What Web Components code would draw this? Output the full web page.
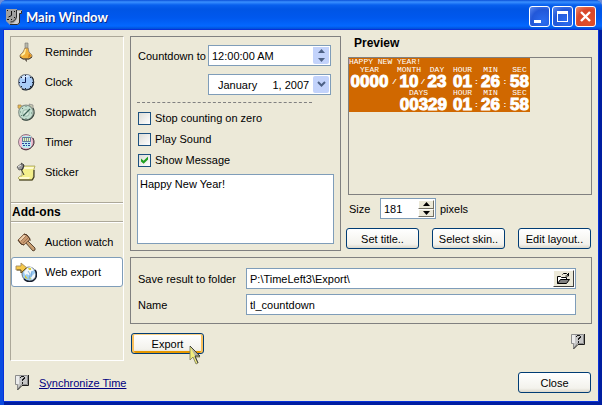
<!DOCTYPE html>
<html lang="en">
<head>
<meta charset="utf-8">
<title>Main Window</title>
<style>
  body {
    margin: 0;
    background: #6f8fd8;
    font: 11px/14px "Liberation Sans", sans-serif;
    color: #000;
    --face: #ece9d8;
    --edge: #7f9db9;
    --frame: #808080;
  }
</style>
</head>
<body>
<main-window></main-window>

<script>
/* ------------------------------------------------------------ */
/* Icons                                                        */
/* ------------------------------------------------------------ */

const ICONS = {
  app: `<svg width="16" height="16" viewBox="0 0 16 16">
    <path d="M0 0h11v1h5v4h-2v9l-2 2H4l-4-4z" fill="#a0a0a0"/>
    <path d="M11 2h4v2h-2v9l-2 2H5c4-1 6-4 6-7z" fill="#cfcfcf"/>
    <path d="M10.500 1v7c-1 3-3 5-6 5M15.500 2v2.500h-2V14l-2 1.500H4" fill="none" stroke="#2a2a2a"/>
    <path d="M5.500 2v4.500l-3 1.500M1 1.500h1M8 2.500h1M1 10.500h2M8 8.500h1M5 10.500h1" fill="none" stroke="#111"/>
  </svg>`,
  bell: `<svg width="20" height="20" viewBox="0 0 20 20">
    <path d="M9 1h3v6H9z" fill="#b8b8a8" stroke="#777" stroke-width=".6"/>
    <path d="M9 6h3l1 4 3 3v2l-3 2H7l-3-2v-2l3-3z" fill="#f0b13c" stroke="#8a7866" stroke-width=".8"/>
    <path d="M9 7h1l-1 5-3 2-1-1 3-3z" fill="#fff0a8"/>
    <path d="M13 11l2 3-3 2z" fill="#cf7d18"/>
    <path d="M4 15l3 2h6l3-2M10 17v2h1" fill="none" stroke="#40362c"/>
  </svg>`,
  clock: `<svg width="20" height="20" viewBox="0 0 20 20">
    <circle cx="10" cy="10" r="7.500" fill="#a9cdf8" stroke="#6f7680" stroke-width="1.200"/>
    <path d="M16 5a8 8 0 0 1-10 12" fill="none" stroke="#16202e" stroke-width="1.200"/>
    <path d="M5 6c2-3 6-4 9-2l-6 3z" fill="#d5e8ff"/>
    <path d="M9.500 5v5.500H6" fill="none" stroke="#101c50"/>
    <path d="M9.500 3v1M9.500 16v1M3 10.500h1M16 10.500h1M5 5l1 1M15 5l-1 1M5 15l1-1M15 15l-1-1" stroke="#18243a"/>
  </svg>`,
  stopwatch: `<svg width="20" height="20" viewBox="0 0 20 20">
    <path d="M2 3h3l1 2-2 2-2-1z" fill="#e7b94c" stroke="#9b8058" stroke-width=".7"/>
    <path d="M13 2l4 1v3l-2 1z" fill="#c7c8b0" stroke="#888" stroke-width=".7"/>
    <circle cx="10" cy="10.500" r="7.300" fill="#c2decf" stroke="#89958c" stroke-width="1.200"/>
    <path d="M17 6a8 8 0 0 1-11 11" fill="none" stroke="#35453e" stroke-width="1.200"/>
    <circle cx="10" cy="11" r="3.300" fill="#d8ebdf" stroke="#8fae9f" stroke-width=".8"/>
    <path d="M7 14l7-7" stroke="#3b6255" stroke-width="1.300"/>
    <path d="M10 4v1M10 16v1M4 10h1M15 11h1M6 6l1 1M5 14l1-1" stroke="#47685a" stroke-width=".8"/>
  </svg>`,
  timer: `<svg width="20" height="20" viewBox="0 0 20 20">
    <circle cx="10" cy="10" r="7.500" fill="#f4bfd3" stroke="#8d7a84"/>
    <path d="M17 6a8 8 0 0 1-12 10" fill="none" stroke="#4b303d"/>
    <path d="M6 4h9v11l-2 1H8l-2-1z" fill="#b9ecf0"/>
    <path d="M6.500 5.500h8v4h-8z" fill="#e4f8b8" stroke="#46588a" stroke-width=".8"/>
    <path d="M8.500 6v3M10.500 6v3M12.500 6v3" stroke="#5b6a94" stroke-width=".7"/>
    <path d="M6 11.500h2M9 11.500h2M12 11.500h2M7 13.500h2M10 13.500h1M12 13.500h2" stroke="#2c409c"/>
  </svg>`,
  sticker: `<svg width="20" height="20" viewBox="0 0 20 20">
    <path d="M5 4h14l-1 3-1 11H4l-2-2 2-2h2V7z" fill="#f4f08c" stroke="#a5a05a" stroke-width=".8"/>
    <path d="M7 5h11l-1 2H7zM3 15h11l-1 2H4z" fill="#fffbd0"/>
    <path d="M3 18h13l2-3V8" fill="none" stroke="#36331c" stroke-width="1.100"/>
    <path d="M1 5l4-3 3 2-1 3-4 1z" fill="#9a9a9a" stroke="#555" stroke-width=".8"/>
    <path d="M5 1l3 2-2 5M5 7l3 6" fill="none" stroke="#333"/>
    <path d="M2 5l3-2" stroke="#eee"/>
  </svg>`,
  gavel: `<svg width="20" height="20" viewBox="0 0 20 20">
    <path d="M9 10l2-2 8 8v2l-2 1z" fill="#c99f72" stroke="#4f3926" stroke-width=".9"/>
    <path d="M2 8l6-6 3 1 3 4-6 6-3-1z" fill="#c99a70" stroke="#6e5138" stroke-width=".8"/>
    <path d="M3 8l5-5 2 1-5 5z" fill="#edd0ae"/>
    <path d="M2 8l3 4 3 1M8 2l3 1 3 4v2" fill="none" stroke="#503722"/>
    <path d="M5 9l5-5M7 11l5-5" stroke="#94694a" stroke-width=".8"/>
  </svg>`,
  web: `<svg width="22" height="20" viewBox="0 0 22 20">
    <circle cx="14" cy="12" r="7" fill="#9cccf4" stroke="#70777c"/>
    <path d="M12 6l4-1 3 3-3 2-1 4-3-2-2 1-1-3zM16 15l4-4v4l-3 3z" fill="#f4f8fa"/>
    <path d="M10 13l3 4-3-1zM13 6h3v2h-2zM14 15l2 1-1 2z" fill="#d9ce35"/>
    <path d="M20 8a7 7 0 0 1-11 9" fill="none" stroke="#172030" stroke-width="1.400"/>
    <path d="M13 9l2 3-1 5M17 9l-1 6" stroke="#6ea2d6" fill="none" stroke-width=".8"/>
    <path d="M1 4h5V1l6 5-6 5V8H1z" fill="#f7c94a" stroke="#a48b5e" stroke-width=".9"/>
    <path d="M2 8h4v3l5-5" fill="none" stroke="#574318" stroke-width=".8"/>
  </svg>`,
  help: `<svg width="16" height="17" viewBox="0 0 16 17">
    <path d="M1.500 1.500h12v9h-6l-4 5v-5h-2z" fill="#c6c6c6" stroke="#8c8c8c"/>
    <path d="M2 2h3v8H2z" fill="#ececec"/>
    <path d="M14.500 1v10.500H8L3.500 16" fill="none" stroke="#1c1c1c"/>
    <path d="M6 3h1V2h3v1h1v2h-1v1H9v1H8V5h1V4h1V3H7v1H6zM8 8h1v2H8z" fill="#1c1c1c"/>
  </svg>`,
  folder: `<svg width="15" height="13" viewBox="0 0 15 13">
    <path d="M1.500 11.500v-7h3l1 1h5v2" fill="#fff" stroke="#000"/>
    <path d="M1.500 11.500l3-4h9l-3 4z" fill="#808080" stroke="#000"/>
    <path d="M6.500 2.500l1-1h3l2 2M12.500 1v3h-3" fill="none" stroke="#000"/>
  </svg>`,
  pointer: `<svg width="13" height="20" viewBox="0 0 13 20">
    <path d="M1 1v14l3-3 3 7 2-1-3-6h5z" fill="#f2ee7c" stroke="#77775c" stroke-width=".8"/>
    <path d="M2 3l8 8H6z" fill="#b5b4a6"/>
    <path d="M1 1l10 10H6l3 7" fill="none" stroke="#333" stroke-width=".9"/>
  </svg>`
};

/** Base class: fills an open shadow root with the subclass's markup. */
class Part extends HTMLElement {
  connectedCallback() {
    if (this.shadowRoot) return;
    const template = document.createElement('template');
    template.innerHTML = `<style>* { box-sizing: border-box; } svg { display: block; flex: none; }</style>${this.render()}`;
    this.attachShadow({ mode: 'open' }).appendChild(template.content.cloneNode(true));
  }

  attr(name, fallback = '') {
    return this.getAttribute(name) ?? fallback;
  }
}

/* ------------------------------------------------------------ */
/* Controls                                                     */
/* ------------------------------------------------------------ */

customElements.define('xp-icon', class extends Part {
  render() {
    return `
      <style>:host { display: block; flex: none; }</style>
      ${ICONS[this.attr('name')]}
    `;
  }
});

customElements.define('xp-button', class extends Part {
  render() {
    return `
      <style>
        :host { display: block; width: 73px; }
        button {
          display: block;
          width: 100%;
          height: 21px;
          padding: 0;
          border: 1px solid #003c74;
          border-radius: 3px;
          background: linear-gradient(#fff, #f3f2ec 80%, #dcd8cc);
          font: inherit;
          color: inherit;
          white-space: nowrap;
        }
        :host([hot]) button {
          box-shadow: inset 0 1px #fbd185, inset 2px 0 #f9c05c, inset -2px 0 #f9c05c, inset 0 -2px #e59700;
        }
      </style>
      <button type="button"><slot></slot></button>
    `;
  }
});

customElements.define('caption-button', class extends Part {
  render() {
    const glyphs = {
      Minimize: '<path d="M4 13h7v3H4z" fill="#fff"/>',
      Maximize: '<path d="M4 4h11v11H4zM5 7v7h9V7z" fill="#fff" fill-rule="evenodd"/>',
      Close: '<path d="M5 5l9 9M14 5l-9 9" stroke="#fff" stroke-width="2.400"/>'
    };
    const name = this.attr('name');
    return `
      <style>
        :host { display: block; }
        button {
          display: block;
          width: 21px;
          height: 21px;
          padding: 0;
          border: 1px solid #fff;
          border-radius: 3px;
          background: radial-gradient(circle at 70% 75%, #2b6cf0, #2257d8 60%, #5f8cf0);
        }
        :host([name="Close"]) button {
          background: radial-gradient(circle at 70% 75%, #e0502a, #d8462a 60%, #f09070);
        }
      </style>
      <button type="button" aria-label="${name}">
        <svg width="19" height="19" viewBox="0 0 19 19">${glyphs[name]}</svg>
      </button>
    `;
  }
});

customElements.define('xp-check', class extends Part {
  render() {
    return `
      <style>
        :host { display: block; }
        label { display: flex; align-items: center; gap: 4px; }
        input {
          appearance: none;
          flex: none;
          display: grid;
          width: 13px;
          height: 13px;
          margin: 0;
          border: 1px solid #1c5180;
          background: linear-gradient(135deg, #dcdcd7, #fff);
        }
        input:checked::before {
          content: "";
          background: #21a121;
          clip-path: polygon(18% 36%, 42% 57%, 82% 18%, 82% 45%, 42% 84%, 18% 63%);
        }
      </style>
      <label><input type="checkbox" ${this.hasAttribute('checked') ? 'checked' : ''}><slot></slot></label>
    `;
  }
});

customElements.define('xp-spinner', class extends Part {
  render() {
    return `
      <style>
        :host { display: flex; flex-direction: column; flex: none; width: 16px; }
        button {
          flex: 1;
          display: grid;
          place-items: center;
          min-height: 0;
          padding: 0;
          border: 0;
          background: #c3d3fb;
          color: #4d6185;
        }
        button:first-child { border-radius: 2px 2px 0 0; }
        button:last-child { border-radius: 0 0 2px 2px; }
        :host([classic]) button {
          border: 1px solid;
          border-color: #fff #716f64 #716f64 #fff;
          border-radius: 0;
          background: var(--face);
          color: #000;
        }
      </style>
      <button type="button" aria-label="Up"><svg width="7" height="4"><path d="M0 4l3.500-4L7 4z" fill="currentColor"/></svg></button>
      <button type="button" aria-label="Down"><svg width="7" height="4"><path d="M0 0l3.500 4L7 0z" fill="currentColor"/></svg></button>
    `;
  }
});

/** Labelled text box; the slot holds whatever sits inside its right edge. */
customElements.define('xp-field', class extends Part {
  render() {
    return `
      <style>
        :host { display: flex; align-items: center; min-width: 0; }
        label { flex: none; width: var(--label-width, 70px); white-space: nowrap; }
        .box {
          display: flex;
          flex: 1;
          min-width: 0;
          height: 21px;
          padding: 1px;
          border: 1px solid var(--edge);
          background: #fff;
        }
        input {
          flex: 1;
          width: 0;
          min-width: 0;
          padding: 0 2px;
          border: 0;
          outline: 0;
          background: none;
          font: inherit;
          color: inherit;
        }
      </style>
      <label for="text">${this.attr('label')}</label>
      <div class="box"><input id="text" type="text" value="${this.attr('value')}"><slot></slot></div>
    `;
  }
});

customElements.define('xp-date', class extends Part {
  render() {
    return `
      <style>
        :host { display: flex; }
        .box {
          display: flex;
          flex: 1;
          min-width: 0;
          height: 21px;
          padding: 1px;
          border: 1px solid var(--edge);
          background: #fff;
        }
        select {
          appearance: none;
          flex: 1;
          min-width: 0;
          padding: 0 0 0 8px;
          border: 0;
          background: none;
          font: inherit;
          color: inherit;
        }
        .arrow {
          display: grid;
          place-items: center;
          flex: none;
          width: 16px;
          border-radius: 2px;
          background: #c3d3fb;
        }
      </style>
      <div class="box">
        <select aria-label="Date"><option>January&nbsp;&nbsp;&nbsp;&nbsp;&nbsp;1, 2007</option></select>
        <span class="arrow"><svg width="9" height="7"><path d="M1 1l3.500 3.500L8 1" fill="none" stroke="#4d6185" stroke-width="2"/></svg></span>
      </div>
    `;
  }
});

customElements.define('browse-button', class extends Part {
  render() {
    return `
      <style>
        :host { display: block; }
        button {
          display: grid;
          place-items: center;
          width: 21px;
          height: 17px;
          padding: 0;
          border: 1px solid;
          border-color: #fff #404040 #404040 #fff;
          background: var(--face);
        }
      </style>
      <button type="button" aria-label="Browse">${ICONS.folder}</button>
    `;
  }
});

/* ------------------------------------------------------------ */
/* Sidebar                                                      */
/* ------------------------------------------------------------ */

customElements.define('side-item', class extends Part {
  render() {
    return `
      <style>
        :host { display: block; }
        button {
          display: grid;
          grid-template-columns: 22px 1fr;
          align-items: center;
          justify-items: center;
          gap: 8px;
          width: 100%;
          height: 30px;
          padding: 0 3px;
          border: 1px solid transparent;
          border-radius: 3px;
          background: none;
          font: inherit;
          color: inherit;
          white-space: nowrap;
        }
        span { justify-self: start; }
        :host([selected]) button { border-color: var(--edge); background: #fff; }
      </style>
      <button type="button">${ICONS[this.attr('icon')]}<span><slot></slot></span></button>
    `;
  }
});

customElements.define('side-bar', class extends Part {
  render() {
    return `
      <style>
        :host {
          display: block;
          border: 1px solid;
          border-color: #aca899 #fff #fff #aca899;
        }
        h2 {
          margin: 15px 0 5px;
          padding: 2px 1px;
          border: solid #aca899;
          border-width: 1px 0;
          box-shadow: inset 0 1px #fff, 0 1px #fff;
          font-size: 12px;
          line-height: 14px;
        }
      </style>
      <slot></slot>
      <h2>Add-ons</h2>
      <slot name="addons"></slot>
    `;
  }
});

/* ------------------------------------------------------------ */
/* Countdown skin                                               */
/* ------------------------------------------------------------ */

customElements.define('clock-skin', class extends Part {
  render() {
    const cell = (label, digits, cls = '') =>
      `<div class="cell ${cls}"><small>${label}</small><b>${digits}</b></div>`;
    const mark = char => `<i>${char}</i>`;
    const time = cell('HOUR', '01', 'hour') + mark(':') + cell('MIN', '26') + mark(':') + cell('SEC', '58');
    return `
      <style>
        :host {
          display: block;
          width: 181px;
          background: #d06800;
          color: #fff;
          font: 8px/8px "Liberation Mono", monospace;
        }
        p { margin: 0; }
        .grid {
          display: grid;
          grid-template-columns: 41px 9px 20px 8px 20px 5px 21px 7px 21px 8px 21px;
        }
        .cell { display: flex; flex-direction: column; align-items: center; white-space: nowrap; }
        .hour { grid-column: 7; }
        .days { grid-column: 2 / 6; align-items: end; }
        .days small { align-self: center; }
        small { font-size: inherit; }
        b { font: bold 17px/15px "Liberation Sans", sans-serif; -webkit-text-stroke: 1px #fff; }
        i { align-self: end; font-style: normal; font-weight: bold; line-height: 15px; text-align: center; }
      </style>
      <p>HAPPY NEW YEAR!</p>
      <div class="grid">
        ${cell('YEAR', '0000')}${mark('/')}${cell('MONTH', '10')}${mark('/')}${cell('DAY', '23')}${time}
        ${cell('DAYS', '00329', 'days')}${time}
      </div>
    `;
  }
});

/* ------------------------------------------------------------ */
/* Panels                                                       */
/* ------------------------------------------------------------ */

customElements.define('countdown-panel', class extends Part {
  render() {
    return `
      <style>
        :host {
          display: flex;
          flex-direction: column;
          min-width: 0;
          padding: 8px 6px 6px;
          border: 1px solid var(--frame);
        }
        .when { display: grid; gap: 8px; padding: 0 3px 0 1px; }
        xp-date { margin-left: 70px; }
        hr { width: 175px; margin: 7px 0 8px; border: 0; border-top: 1px dashed var(--frame); }
        .options { display: grid; gap: 7px; padding-left: 1px; }
        textarea {
          flex: 1;
          display: block;
          width: 100%;
          min-height: 70px;
          margin-top: 7px;
          padding: 2px;
          border: 1px solid var(--edge);
          resize: none;
          font: inherit;
          color: inherit;
        }
      </style>
      <div class="when">
        <xp-field label="Countdown to" value="12:00:00 AM"><xp-spinner></xp-spinner></xp-field>
        <xp-date></xp-date>
      </div>
      <hr>
      <div class="options">
        <xp-check>Stop counting on zero</xp-check>
        <xp-check>Play Sound</xp-check>
        <xp-check checked>Show Message</xp-check>
      </div>
      <textarea aria-label="Message">Happy New Year!</textarea>
    `;
  }
});

customElements.define('preview-panel', class extends Part {
  render() {
    return `
      <style>
        :host { display: flex; flex-direction: column; min-width: 0; padding-bottom: 2px; }
        h2 { margin: 0 0 7px 8px; font-size: 12px; line-height: 14px; }
        .stage { flex: 1; margin-left: 2px; border: 1px solid var(--frame); }
        .size { display: flex; align-items: center; gap: 4px; margin: 3px 0 9px 3px; }
        .size xp-field { --label-width: 31px; width: 87px; }
        .actions { display: flex; justify-content: space-between; padding-right: 1px; }
      </style>
      <h2>Preview</h2>
      <div class="stage"><clock-skin></clock-skin></div>
      <div class="size">
        <xp-field label="Size" value="181"><xp-spinner classic></xp-spinner></xp-field>
        <span>pixels</span>
      </div>
      <div class="actions">
        <xp-button>Set title..</xp-button>
        <xp-button>Select skin..</xp-button>
        <xp-button>Edit layout..</xp-button>
      </div>
    `;
  }
});

customElements.define('output-panel', class extends Part {
  render() {
    return `
      <style>
        :host {
          display: grid;
          gap: 5px;
          padding: 10px 15px 8px 7px;
          border: 1px solid var(--frame);
          --label-width: 108px;
        }
      </style>
      <xp-field label="Save result to folder" value="P:\\TimeLeft3\\Export\\"><browse-button></browse-button></xp-field>
      <xp-field label="Name" value="tl_countdown"></xp-field>
    `;
  }
});

/* ------------------------------------------------------------ */
/* Window                                                       */
/* ------------------------------------------------------------ */

customElements.define('main-window', class extends Part {
  render() {
    return `
      <style>
        :host {
          display: flex;
          flex-direction: column;
          min-height: 100vh;
          border-radius: 7px 7px 0 0;
          background: #0a4be0;
          overflow: hidden;
        }
        header {
          display: flex;
          align-items: center;
          gap: 4px;
          height: 30px;
          padding: 3px 6px 0;
          background: linear-gradient(#0a4fd8, #3a90ff 2px, #0860ee 5px, #0055e5 9px, #0058ee 18px, #0368ff 26px, #0146c8);
        }
        h1 {
          flex: 1;
          margin: 0;
          font: bold 13px/16px Lato, sans-serif;
          color: #fff;
          text-shadow: 1px 1px #0a2a8a;
        }
        .caption { display: flex; gap: 2px; }
        .client {
          flex: 1;
          display: flex;
          flex-direction: column;
          margin: 0 4px 4px;
          padding: 6px 6px 8px;
          background: var(--face);
          box-shadow: 0 0 0 1px #0831d9, 2px 2px 0 2px #001ea0;
        }
        .body { flex: 1; display: grid; grid-template-columns: 114px minmax(0, 1fr); gap: 6px; }
        main { display: flex; flex-direction: column; gap: 6px; min-width: 0; }
        .settings {
          display: grid;
          grid-template-columns: minmax(0, 211fr) minmax(0, 246fr);
          gap: 5px;
        }
        .run { display: flex; align-items: start; justify-content: space-between; padding: 3px 6px 0 1px; }
        .export { position: relative; }
        .pointer { position: absolute; left: 58px; top: 12px; }
        footer { display: flex; align-items: center; gap: 9px; padding: 11px 1px 0 4px; }
        .sync { flex: 1; }
        a { color: #000080; }
      </style>
      <header>
        <xp-icon name="app"></xp-icon>
        <h1>Main Window</h1>
        <div class="caption">
          <caption-button name="Minimize"></caption-button>
          <caption-button name="Maximize"></caption-button>
          <caption-button name="Close"></caption-button>
        </div>
      </header>
      <div class="client">
        <div class="body">
          <side-bar>
            <side-item icon="bell">Reminder</side-item>
            <side-item icon="clock">Clock</side-item>
            <side-item icon="stopwatch">Stopwatch</side-item>
            <side-item icon="timer">Timer</side-item>
            <side-item icon="sticker">Sticker</side-item>
            <side-item slot="addons" icon="gavel">Auction watch</side-item>
            <side-item slot="addons" icon="web" selected>Web export</side-item>
          </side-bar>
          <main>
            <div class="settings">
              <countdown-panel></countdown-panel>
              <preview-panel></preview-panel>
            </div>
            <output-panel></output-panel>
            <div class="run">
              <div class="export">
                <xp-button hot>Export</xp-button>
                <xp-icon class="pointer" name="pointer"></xp-icon>
              </div>
              <xp-icon name="help"></xp-icon>
            </div>
          </main>
        </div>
        <footer>
          <xp-icon name="help"></xp-icon>
          <div class="sync"><a href="#sync">Synchronize Time</a></div>
          <xp-button>Close</xp-button>
        </footer>
      </div>
    `;
  }
});
</script>
</body>
</html>
